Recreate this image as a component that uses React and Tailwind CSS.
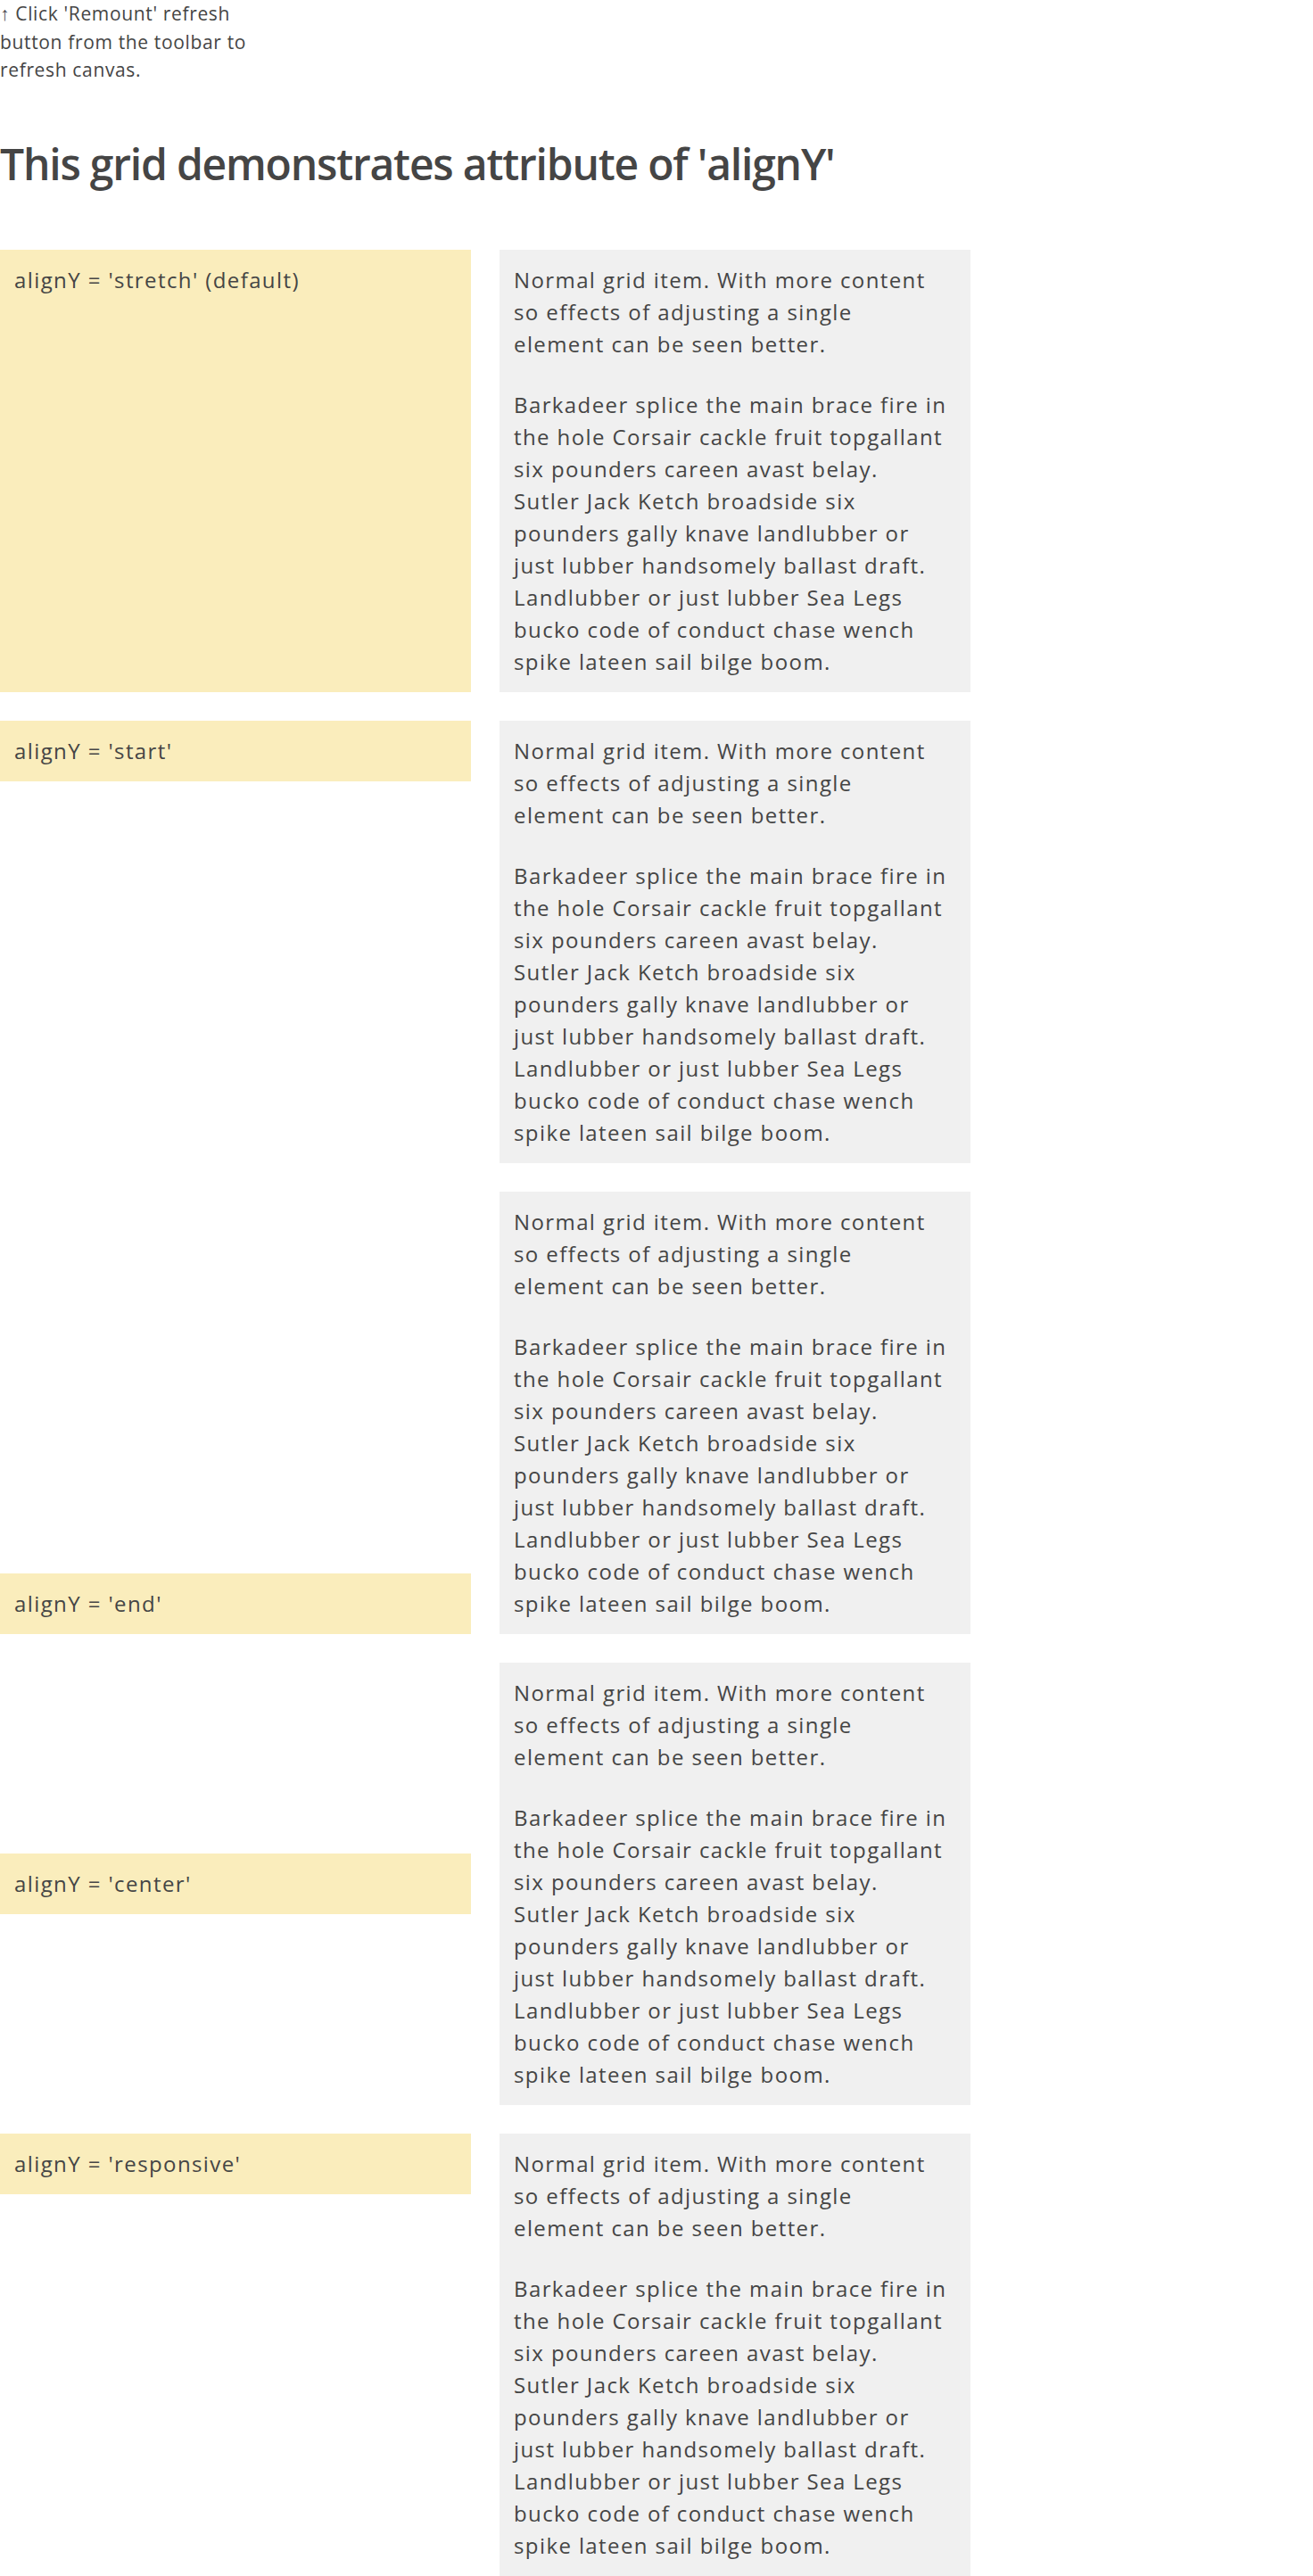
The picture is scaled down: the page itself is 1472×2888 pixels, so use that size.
import React from 'react';

// line breaks follow the reference so the wrap stays the same with a substitute font
const BODY_ONE = ['Normal grid item. With more content', 'so effects of adjusting a single', 'element can be seen better.'];
const BODY_TWO = [
  'Barkadeer splice the main brace fire in',
  'the hole Corsair cackle fruit topgallant',
  'six pounders careen avast belay.',
  'Sutler Jack Ketch broadside six',
  'pounders gally knave landlubber or',
  'just lubber handsomely ballast draft.',
  'Landlubber or just lubber Sea Legs',
  'bucko code of conduct chase wench',
  'spike lateen sail bilge boom.',
];

// each row: label + how the yellow cell sits against the tall grey one
const rows = [
  { label: "alignY = 'stretch' (default)", align: 'self-stretch' },
  { label: "alignY = 'start'", align: 'self-start' },
  { label: "alignY = 'end'", align: 'self-end' },
  { label: "alignY = 'center'", align: 'self-center' },
  { label: "alignY = 'responsive'", align: 'self-start' },
];

function Lines({ lines, className = '' }) {
  return (
    <p className={className}>
      {lines.map((line) => (
        <span key={line} className="block whitespace-nowrap">
          {line}
        </span>
      ))}
    </p>
  );
}

function GreyItem() {
  return (
    <div className="bg-[#f0f0f0] p-4">
      <Lines lines={BODY_ONE} />
      <Lines lines={BODY_TWO} className="mt-8" />
    </div>
  );
}

export default function App() {
  return (
    <div className="min-h-[2888px] bg-white text-[#454545] font-['Open_Sans',sans-serif]">
      <div className="w-[320px] text-[21px] leading-[31.5px] tracking-[0.65px]">
        ↑ Click 'Remount' refresh button from the toolbar to refresh canvas.
      </div>

      <h1 className="mt-[58px] mb-[65px] text-[48px] leading-[62px] font-semibold tracking-[-1.2px]">
        This grid demonstrates attribute of 'alignY'
      </h1>

      <div className="grid grid-cols-[528px_528px] gap-8 text-[24px] leading-[36px] tracking-[1.4px]">
        {rows.map((row) => (
          <React.Fragment key={row.label}>
            <div className={`bg-[#faedbc] p-4 ${row.align}`}>{row.label}</div>
            <GreyItem />
          </React.Fragment>
        ))}
      </div>
    </div>
  );
}
